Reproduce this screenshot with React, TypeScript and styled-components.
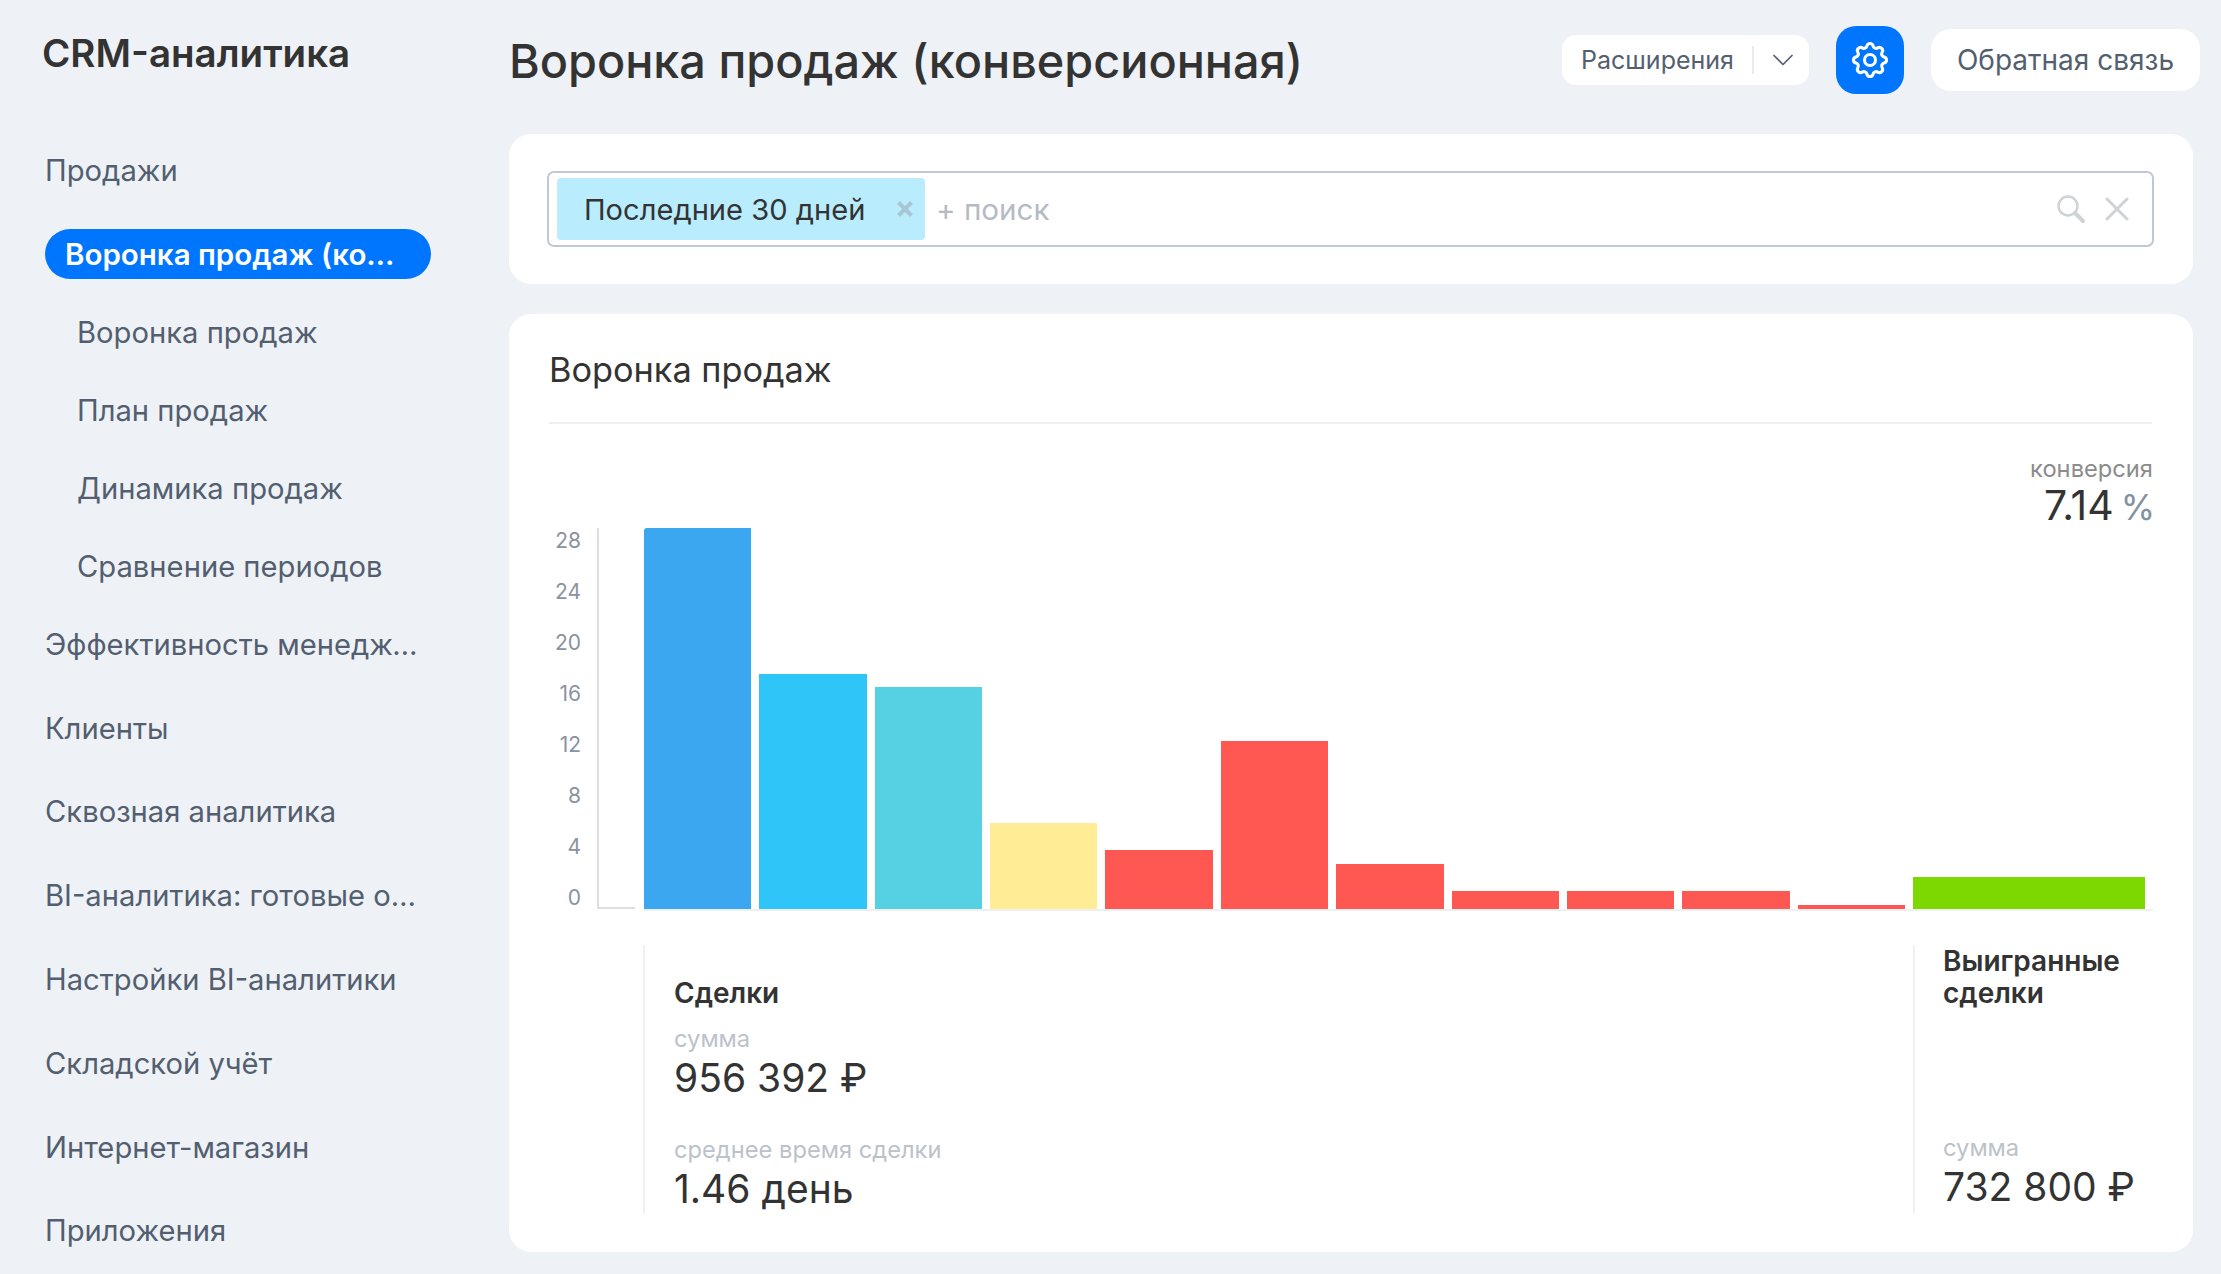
import React from 'react';
import styled, { createGlobalStyle } from 'styled-components';
import { TbSettings } from 'react-icons/tb';

const GlobalStyle = createGlobalStyle`
  html, body {
    margin: 0;
    padding: 0;
    background: #eef2f6;
  }

  * {
    box-sizing: border-box;
  }
`;

const Page = styled.div`
  display: flex;
  width: 2221px;
  height: 1274px;
  overflow: hidden;
  background: #eef2f6;
  font-family: Inter, 'Noto Sans', sans-serif;
`;

const Sidebar = styled.aside`
  flex: none;
  width: 509px;
  padding-left: 45px;
`;

const Logo = styled.div`
  height: 128px;
  margin-left: -3px;
  padding-top: 29px;
  color: #333;
  font-size: 38.5px;
  font-weight: 600;
  line-height: 48px;
  white-space: nowrap;
`;

const NavItem = styled.div`
  height: 83.8px;
  width: 376px;
  color: #535f70;
  font-size: 29.2px;
  line-height: 86px;
  white-space: nowrap;
  overflow: hidden;
  text-overflow: ellipsis;
`;

const ActiveRow = styled.div`
  display: flex;
  align-items: center;
  height: 84px;
`;

const ActivePill = styled.div`
  width: 386px;
  height: 50px;
  padding: 0 26px 0 20px;
  border-radius: 25px;
  background: #0076ff;
  color: #fff;
  font-size: 29.5px;
  font-weight: 600;
  line-height: 50px;
  white-space: nowrap;
  overflow: hidden;
  text-overflow: ellipsis;
`;

const SubList = styled.div`
  margin: -3px 0 -3px;
`;

const SubItem = styled.div`
  height: 78px;
  padding-left: 32px;
  color: #535f70;
  font-size: 29.2px;
  line-height: 80px;
  white-space: nowrap;
`;

const Main = styled.main`
  flex: 1;
  min-width: 0;
  padding-right: 28px;
`;

const Header = styled.header`
  display: flex;
  align-items: center;
  height: 120px;
  margin-bottom: 14px;
  margin-right: -7px;
`;

const PageTitle = styled.h1`
  flex: 1;
  margin: 2px 0 0;
  color: #333;
  font-size: 46.8px;
  font-weight: 500;
  line-height: 60px;
  white-space: nowrap;
`;

const ExtensionsButton = styled.div`
  display: flex;
  align-items: center;
  width: 247px;
  height: 50px;
  padding-left: 19px;
  border-radius: 14px;
  background: #fff;
  color: #535f70;
  font-size: 25px;
`;

const ButtonDivider = styled.span`
  width: 2px;
  height: 28px;
  margin: 0 19px 0 18px;
  background: #e8ebef;
`;

const GearButton = styled.div`
  display: flex;
  align-items: center;
  justify-content: center;
  width: 68px;
  height: 68px;
  margin: 0 27px;
  border-radius: 20px;
  background: #0076ff;
  color: #fff;
`;

const FeedbackButton = styled.div`
  display: flex;
  align-items: center;
  justify-content: center;
  width: 269px;
  height: 62px;
  border-radius: 20px;
  background: #fff;
  color: #535f70;
  font-size: 28px;
`;

const Card = styled.section`
  border-radius: 22px;
  background: #fff;
`;

const FilterCard = styled(Card)`
  height: 150px;
  padding: 37px 39px 37px 38px;
  margin-bottom: 30px;
`;

const SearchBox = styled.div`
  display: flex;
  align-items: center;
  height: 76px;
  padding: 0 23px 0 8px;
  border: 2px solid #c2c7d6;
  border-radius: 7px;
`;

const FilterTag = styled.div`
  display: flex;
  align-items: center;
  width: 368px;
  height: 62px;
  padding-left: 27px;
  border-radius: 4px;
  background: #b9ecfd;
  color: #333;
  font-size: 29.1px;
  white-space: nowrap;
`;

const TagClose = styled.svg`
  margin-left: auto;
  margin-right: 12px;
`;

const SearchPlaceholder = styled.div`
  flex: 1;
  padding-left: 11px;
  color: #b5bac4;
  font-size: 29.6px;
`;

const SearchIcons = styled.div`
  display: flex;
  align-items: center;
  gap: 19px;
`;

const ChartCard = styled(Card)`
  height: 938px;
  padding: 0 41px 0 40px;
`;

const CardHeading = styled.div`
  height: 110px;
  padding-top: 35px;
  border-bottom: 2px solid #eef0f2;
  color: #333;
  font-size: 34.3px;
  line-height: 42px;
`;

const Conversion = styled.div`
  display: flex;
  flex-direction: column;
  align-items: flex-end;
  height: 104px;
  padding-top: 31px;
`;

const ConversionLabel = styled.div`
  margin-right: -1px;
  color: #8c8c8c;
  font-size: 23.7px;
  line-height: 28px;
`;

const ConversionValue = styled.div`
  margin-right: -3px;
  color: #333;
  font-size: 41px;
  line-height: 44px;
`;

const ConversionUnit = styled.span`
  margin-left: 7px;
  color: #8292a0;
  font-size: 35px;
`;

const ChartRow = styled.div`
  display: flex;
  align-items: flex-start;
`;

const YAxisLabels = styled.div`
  display: flex;
  flex-direction: column;
  justify-content: space-between;
  align-items: flex-end;
  width: 32px;
  height: 381px;
  margin-right: 16px;
  padding-top: 2px;
  color: #8a93a0;
  font-size: 21px;
  line-height: 22px;
`;

const YAxisLine = styled.div`
  width: 38px;
  height: 381px;
  margin-right: 9px;
  border-left: 2px solid #dedede;
  border-bottom: 2px solid #dedede;
`;

const Bars = styled.div`
  flex: 1;
  display: flex;
  align-items: flex-end;
  gap: 8px;
  height: 383px;
  margin-right: -1px;
  padding-right: 8px;
  border-bottom: 2px solid #eef0f2;
`;

const Bar = styled.div<{ $color: string; $wide?: boolean }>`
  flex: ${({ $wide }) => ($wide ? '0 0 232px' : '1 1 0')};
  background: ${({ $color }) => $color};

  &:first-child {
    border-top-left-radius: 3px;
  }
`;

const Summary = styled.div`
  display: flex;
  height: 268px;
  margin-top: 34px;
  margin-left: 94px;
`;

const SummaryColumn = styled.div<{ $narrow?: boolean }>`
  display: flex;
  flex-direction: column;
  flex: ${({ $narrow }) => ($narrow ? '0 0 239px' : '1')};
  padding-left: ${({ $narrow }) => ($narrow ? '28px' : '29px')};
  border-left: 2px solid #eef0f2;
`;

const SummaryTitle = styled.div`
  flex: none;
  display: flex;
  align-items: flex-end;
  height: 64px;
  margin-bottom: 17px;
  color: #333;
  font-size: 28px;
  font-weight: 600;
  line-height: 32px;
`;

const MetricLabel = styled.div`
  margin-bottom: 2px;
  color: #bcc2ca;
  font-size: 23.7px;
  line-height: 26px;
`;

const MetricValue = styled.div`
  color: #333;
  font-size: 39px;
  line-height: 48px;
  white-space: nowrap;
`;

const Metric = styled.div<{ $bottom?: boolean }>`
  flex: none;
  margin-top: ${({ $bottom }) => ($bottom ? 'auto' : '0')};
  padding-bottom: ${({ $bottom }) => ($bottom ? '2px' : '0')};

  & + & {
    margin-top: 35px;
  }
`;

const NAV_AFTER = [
  'Эффективность менеджеров',
  'Клиенты',
  'Сквозная аналитика',
  'BI-аналитика: готовые отчёты',
  'Настройки BI-аналитики',
  'Складской учёт',
  'Интернет-магазин',
  'Приложения',
];

const SUB_ITEMS = ['Воронка продаж', 'План продаж', 'Динамика продаж', 'Сравнение периодов'];

const Y_TICKS = [28, 24, 20, 16, 12, 8, 4, 0];

const RED = '#ff5752';

const BARS = [
  { height: 381, color: '#3aa7f0' },
  { height: 235, color: '#30c5f8' },
  { height: 222, color: '#56d1e3' },
  { height: 86, color: '#ffec94' },
  { height: 59, color: RED },
  { height: 168, color: RED },
  { height: 45, color: RED },
  { height: 18, color: RED },
  { height: 18, color: RED },
  { height: 18, color: RED },
  { height: 4, color: RED },
];

const App = () => (
  <>
    <GlobalStyle />
    <Page>
      <Sidebar>
        <Logo>CRM-аналитика</Logo>
        <NavItem>Продажи</NavItem>
        <ActiveRow>
          <ActivePill>Воронка продаж (конверсионная)</ActivePill>
        </ActiveRow>
        <SubList>
          {SUB_ITEMS.map((item) => (
            <SubItem key={item}>{item}</SubItem>
          ))}
        </SubList>
        {NAV_AFTER.map((item) => (
          <NavItem key={item}>{item}</NavItem>
        ))}
      </Sidebar>
      <Main>
        <Header>
          <PageTitle>Воронка продаж (конверсионная)</PageTitle>
          <ExtensionsButton>
            Расширения
            <ButtonDivider />
            <svg width="20" height="12" viewBox="0 0 20 12" fill="none">
              <path d="M1 1.5L10 10.5L19 1.5" stroke="#535f70" strokeWidth="1.7" strokeLinecap="round" strokeLinejoin="round" />
            </svg>
          </ExtensionsButton>
          <GearButton>
            <TbSettings size={44} strokeWidth={1.7} />
          </GearButton>
          <FeedbackButton>Обратная связь</FeedbackButton>
        </Header>
        <FilterCard>
          <SearchBox>
            <FilterTag>
              Последние 30 дней
              <TagClose width="16" height="16" viewBox="0 0 16 16">
                <path d="M1.5 1.5l13 13M14.5 1.5l-13 13" stroke="#a9c7d2" strokeWidth="4" />
              </TagClose>
            </FilterTag>
            <SearchPlaceholder>+ поиск</SearchPlaceholder>
            <SearchIcons>
              <svg width="30" height="30" viewBox="0 0 30 30" fill="none">
                <circle cx="12" cy="12" r="9.5" stroke="#d0d3d6" strokeWidth="2.5" />
                <path d="M19 19l8 8" stroke="#d0d3d6" strokeWidth="4" strokeLinecap="round" />
              </svg>
              <svg width="24" height="24" viewBox="0 0 24 24" fill="none">
                <path d="M2 2l20 20M22 2L2 22" stroke="#d0d3d6" strokeWidth="3" strokeLinecap="round" />
              </svg>
            </SearchIcons>
          </SearchBox>
        </FilterCard>
        <ChartCard>
          <CardHeading>Воронка продаж</CardHeading>
          <Conversion>
            <ConversionLabel>конверсия</ConversionLabel>
            <ConversionValue>
              7.14
              <ConversionUnit>%</ConversionUnit>
            </ConversionValue>
          </Conversion>
          <ChartRow>
            <YAxisLabels>
              {Y_TICKS.map((tick) => (
                <div key={tick}>{tick}</div>
              ))}
            </YAxisLabels>
            <YAxisLine />
            <Bars>
              {BARS.map((bar, index) => (
                <Bar key={index} $color={bar.color} style={{ height: bar.height }} />
              ))}
              <Bar $wide $color="#7dd700" style={{ height: 32 }} />
            </Bars>
          </ChartRow>
          <Summary>
            <SummaryColumn>
              <SummaryTitle>Сделки</SummaryTitle>
              <Metric>
                <MetricLabel>сумма</MetricLabel>
                <MetricValue>956 392 ₽</MetricValue>
              </Metric>
              <Metric>
                <MetricLabel>среднее время сделки</MetricLabel>
                <MetricValue>1.46 день</MetricValue>
              </Metric>
            </SummaryColumn>
            <SummaryColumn $narrow>
              <SummaryTitle>Выигранные сделки</SummaryTitle>
              <Metric $bottom>
                <MetricLabel>сумма</MetricLabel>
                <MetricValue>732 800 ₽</MetricValue>
              </Metric>
            </SummaryColumn>
          </Summary>
        </ChartCard>
      </Main>
    </Page>
  </>
);

export default App;
